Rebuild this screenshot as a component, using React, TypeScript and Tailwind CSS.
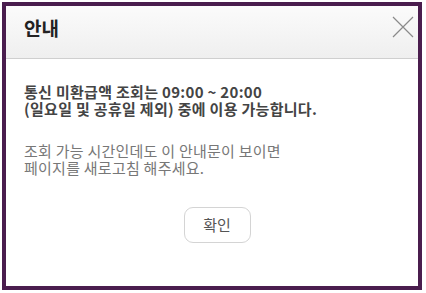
export default function App() {
  return (
    <div
      className="w-[426px] h-[293px] bg-white pl-[2px] pt-[2px]"
      style={{ fontFamily: '"Noto Sans CJK KR", "Noto Sans", sans-serif' }}
    >
      <div className="w-[420px] h-[288px] border-4 border-[#4a1d4e] bg-white flex flex-col">
        {/* header */}
        <div className="h-[53px] shrink-0 flex items-start justify-between border-b border-[#cfcfcf] bg-gradient-to-b from-[#fbfbfb] to-[#efefef]">
          <h1 className="pl-[18px] pt-[9px] text-[19px] leading-[26px] font-bold text-[#222]">안내</h1>
          <button className="mr-[3px] mt-[9px] h-[24px] w-[24px] flex items-center justify-center">
            <svg width="22" height="22" viewBox="0 0 22 22" fill="none" stroke="#8a8a8a" strokeWidth="1.2">
              <path d="M1 1 L21 21 M21 1 L1 21" />
            </svg>
          </button>
        </div>

        {/* body */}
        <div className="flex-1 flex flex-col px-[18px] pt-[24px]">
          <p className="text-[15px] leading-[17px] font-bold text-[#444] tracking-[0.3px]">
            통신 미환급액 조회는 09:00 ~ 20:00
            <br />
            (일요일 및 공휴일 제외) 중에 이용 가능합니다.
          </p>
          <p className="mt-[25px] text-[15px] leading-[17px] text-[#777] tracking-[0.25px]">
            조회 가능 시간인데도 이 안내문이 보이면
            <br />
            페이지를 새로고침 해주세요.
          </p>
          <div className="flex justify-center mt-[31px]">
            <button className="w-[67px] h-[36px] rounded-[9px] border border-[#d4d4d4] bg-white text-[15px] text-[#555] ml-[10px]">
              확인
            </button>
          </div>
        </div>
      </div>
    </div>
  );
}
